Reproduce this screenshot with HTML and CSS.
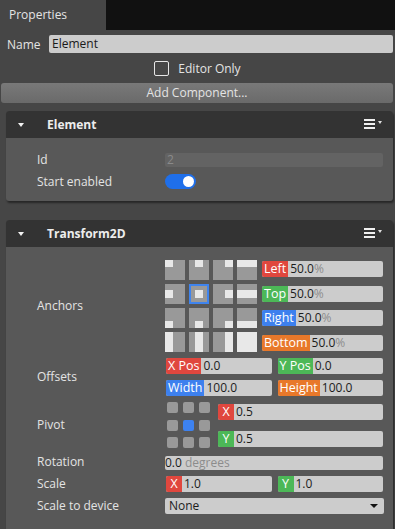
FILE: index.html
```
<html>
  <head>
    <title>Properties</title>
    <link rel="stylesheet" href="styles.css">
  </head>
  <body>
    <div class="tabbar">
      <div class="tab">Properties</div>
      <div class="tab-fill"></div>
    </div>

    <div class="name-row">
      <span class="name-label">Name</span>
      <div class="text-input">Element</div>
    </div>

    <div class="check-row">
      <span class="checkbox"></span>
      <span>Editor Only</span>
    </div>

    <div class="add-btn">Add Component...</div>

    <!-- Element component -->
    <div class="panel">
      <div class="panel-head">
        <span class="caret"></span>
        <span class="panel-title">Element</span>
        <span class="menu-icon"><i></i><i></i><i></i><b></b></span>
      </div>
      <div class="panel-body element-body">
        <div class="prop-label">Id</div>
        <div class="id-input">2</div>
        <div class="prop-label">Start enabled</div>
        <div><span class="toggle"><span class="knob"></span></span></div>
      </div>
    </div>

    <!-- Transform2D component -->
    <div class="panel panel-last">
      <div class="panel-head">
        <span class="caret"></span>
        <span class="panel-title">Transform2D</span>
        <span class="menu-icon"><i></i><i></i><i></i><b></b></span>
      </div>
      <div class="panel-body transform-body">
        <div class="prop-label">Anchors</div>
        <div class="anchors">
          <div class="anchor-grid">
            <span class="cell"><span class="mark tl"></span></span>
            <span class="cell"><span class="mark tc"></span></span>
            <span class="cell"><span class="mark tr"></span></span>
            <span class="cell"><span class="mark ts"></span></span>
            <span class="cell"><span class="mark ml"></span></span>
            <span class="cell selected"><span class="mark mc"></span></span>
            <span class="cell"><span class="mark mr"></span></span>
            <span class="cell"><span class="mark ms"></span></span>
            <span class="cell"><span class="mark bl"></span></span>
            <span class="cell"><span class="mark bc"></span></span>
            <span class="cell"><span class="mark br"></span></span>
            <span class="cell"><span class="mark bs"></span></span>
            <span class="cell"><span class="mark sl"></span></span>
            <span class="cell"><span class="mark sc"></span></span>
            <span class="cell"><span class="mark sr"></span></span>
            <span class="cell"><span class="mark ss"></span></span>
          </div>
          <div class="anchor-fields">
            <div class="field"><span class="chip red">Left</span><span class="val">50.0<em>%</em></span></div>
            <div class="field"><span class="chip green">Top</span><span class="val">50.0<em>%</em></span></div>
            <div class="field"><span class="chip blue">Right</span><span class="val">50.0<em>%</em></span></div>
            <div class="field"><span class="chip orange">Bottom</span><span class="val">50.0<em>%</em></span></div>
          </div>
        </div>

        <div class="prop-label">Offsets</div>
        <div class="offsets">
          <div class="field"><span class="chip red">X Pos</span><span class="val">0.0</span></div>
          <div class="field"><span class="chip green">Y Pos</span><span class="val">0.0</span></div>
          <div class="field"><span class="chip blue">Width</span><span class="val">100.0</span></div>
          <div class="field"><span class="chip orange">Height</span><span class="val">100.0</span></div>
        </div>

        <div class="prop-label">Pivot</div>
        <div class="pivot">
          <div class="pivot-grid">
            <span></span><span></span><span></span>
            <span></span><span class="on"></span><span></span>
            <span></span><span></span><span></span>
          </div>
          <div class="pivot-fields">
            <div class="field"><span class="chip red">X</span><span class="val">0.5</span></div>
            <div class="field"><span class="chip green">Y</span><span class="val">0.5</span></div>
          </div>
        </div>

        <div class="prop-label">Rotation</div>
        <div class="plain">0.0 <em>degrees</em></div>

        <div class="prop-label">Scale</div>
        <div class="pair">
          <div class="field"><span class="chip red">X</span><span class="val">1.0</span></div>
          <div class="field"><span class="chip green">Y</span><span class="val">1.0</span></div>
        </div>

        <div class="prop-label">Scale to device</div>
        <div class="select">None<span class="arrow"></span></div>
      </div>
    </div>
  </body>
</html>
```

FILE: styles.css
```
body {
  margin: 0;
  background: #464646;
  font-family: "Open Sans", "Noto Sans", sans-serif;
  font-size: 12px;
  color: #e4e4e4;
  width: 395px;
  height: 529px;
  overflow: hidden;
}

.tabbar {
  display: flex;
  height: 30px;
}
.tab {
  width: 106px;
  padding-left: 9px;
  line-height: 30px;
  box-sizing: border-box;
}
.tab-fill {
  flex: 1;
  background: #111111;
}

.name-row {
  display: flex;
  align-items: center;
  margin-top: 5px;
  height: 18px;
}
.name-label {
  width: 49px;
  padding-left: 7px;
  box-sizing: border-box;
}
.text-input {
  flex: 1;
  margin-right: 2px;
  height: 18px;
  line-height: 18px;
  background: #cccccc;
  color: #1a1a1a;
  padding-left: 3px;
  border-radius: 2px;
}

.check-row {
  display: flex;
  justify-content: center;
  align-items: center;
  gap: 9px;
  margin-top: 7px;
  height: 16px;
}
.checkbox {
  width: 13px;
  height: 13px;
  border: 1.5px solid #e6e6e6;
  border-radius: 2px;
}

.add-btn {
  margin: 7px 2px 0 1px;
  height: 20px;
  line-height: 20px;
  text-align: center;
  border-radius: 3px;
  background: linear-gradient(#797979, #6a6a6a);
}

.panel {
  margin: 8px 2px 0 6px;
  border-radius: 3px;
  background: #585858;
  box-shadow: 1px 2px 2px rgba(0, 0, 0, 0.45);
}
.panel-last {
  margin-top: 19px;
  height: 330px;
}
.panel-head {
  display: flex;
  align-items: center;
  height: 27px;
  background: #333333;
  border-radius: 3px 3px 0 0;
}
.caret {
  width: 0;
  height: 0;
  margin-left: 12px;
  border-left: 3.5px solid transparent;
  border-right: 3.5px solid transparent;
  border-top: 4px solid #f2f2f2;
}
.panel-title {
  margin-left: 23px;
  font-weight: bold;
  color: #ededed;
  flex: 1;
}
.menu-icon {
  position: relative;
  width: 19px;
  height: 11px;
  margin-right: 10px;
}
.menu-icon i {
  display: block;
  width: 11px;
  height: 2px;
  background: #f0f0f0;
  margin-bottom: 2px;
}
.menu-icon b {
  position: absolute;
  right: 1px;
  top: 2px;
  border-left: 2px solid transparent;
  border-right: 2px solid transparent;
  border-top: 3px solid #e0e0e0;
}

.panel-body {
  display: grid;
  grid-template-columns: 128px 218px;
  padding-left: 31px;
  align-items: center;
}
.prop-label {
  line-height: 16px;
}
.element-body {
  padding-top: 15px;
  padding-bottom: 12px;
  row-gap: 7px;
  grid-template-rows: 14px 15px;
}
.id-input {
  height: 14px;
  line-height: 14px;
  background: #636363;
  color: #8a8a8a;
  border-radius: 2px;
  padding-left: 2px;
}
.toggle {
  display: flex;
  justify-content: flex-end;
  align-items: center;
  width: 31px;
  height: 15px;
  border-radius: 8px;
  background: #1f6fea;
  padding-right: 2px;
  box-sizing: border-box;
}
.knob {
  width: 11px;
  height: 11px;
  border-radius: 50%;
  background: #ffffff;
}

.transform-body {
  padding-top: 13px;
  row-gap: 6px;
}

.anchors {
  display: flex;
  gap: 5px;
}
.anchor-grid {
  display: grid;
  grid-template-columns: repeat(4, 20px);
  grid-auto-rows: 20px;
  gap: 4px;
}
.cell {
  position: relative;
  background: #999999;
  box-sizing: border-box;
}
.cell.selected {
  border: 2px solid #3f84ee;
}
.mark {
  position: absolute;
  background: #e8e8e8;
}
.tl { left: 0; top: 0; width: 8px; height: 7px; }
.tc { left: 6px; top: 0; width: 8px; height: 7px; }
.tr { right: 0; top: 0; width: 8px; height: 7px; }
.ts { left: 0; right: 0; top: 0; height: 7px; }
.ml { left: 0; top: 6px; width: 8px; height: 8px; }
.mc { left: 4px; top: 4px; width: 8px; height: 8px; }
.mr { right: 0; top: 6px; width: 8px; height: 8px; }
.ms { left: 0; right: 0; top: 6px; height: 8px; }
.bl { left: 0; bottom: 0; width: 8px; height: 7px; }
.bc { left: 6px; bottom: 0; width: 8px; height: 7px; }
.br { right: 0; bottom: 0; width: 8px; height: 7px; }
.bs { left: 0; right: 0; bottom: 0; height: 7px; }
.sl { left: 0; top: 0; bottom: 0; width: 8px; }
.sc { left: 6px; top: 0; bottom: 0; width: 8px; }
.sr { right: 0; top: 0; bottom: 0; width: 8px; }
.ss { left: 0; top: 0; right: 0; bottom: 0; }

.anchor-fields {
  flex: 1;
  display: flex;
  flex-direction: column;
  justify-content: space-between;
  padding: 1px 0;
}

.field {
  display: flex;
  height: 16px;
  background: #cccccc;
  border-radius: 2px;
  overflow: hidden;
  line-height: 16px;
}
.chip {
  color: #ffffff;
  padding: 0 2px;
  min-width: 16px;
  box-sizing: border-box;
  text-align: center;
  font-size: 12.5px;
}
.chip.red { background: #e0473e; }
.chip.green { background: #4cb857; }
.chip.blue { background: #3d80ee; }
.chip.orange { background: #e8782a; }
.val {
  color: #1c1c1c;
  padding-left: 2px;
}
em {
  font-style: normal;
  color: #8c8c8c;
}

.plain {
  height: 14px;
  line-height: 14px;
  margin-top: 2px;
  background: #cccccc;
  color: #1c1c1c;
  border-radius: 2px;
}

.offsets {
  display: grid;
  grid-template-columns: 1fr 1fr;
  gap: 6px;
  margin-left: 1px;
}
.pair {
  display: grid;
  grid-template-columns: 1fr 1fr;
  gap: 6px;
  margin-left: 1px;
}

.pivot {
  display: flex;
  gap: 8px;
  padding-left: 2px;
}
.pivot-grid {
  display: grid;
  grid-template-columns: repeat(3, 11px);
  grid-auto-rows: 11px;
  gap: 6.5px 5px;
}
.pivot-grid span {
  background: #999999;
  border-radius: 2px;
}
.pivot-grid span.on {
  background: #3d82f0;
}
.pivot-fields {
  flex: 1;
  display: flex;
  flex-direction: column;
  justify-content: space-between;
  padding: 2px 0 1px;
}

.select {
  position: relative;
  height: 16px;
  line-height: 16px;
  background: #cccccc;
  color: #1c1c1c;
  border-radius: 2px;
  padding-left: 4px;
  margin-right: -1px;
}
.arrow {
  position: absolute;
  right: 6px;
  top: 6px;
  border-left: 4px solid transparent;
  border-right: 4px solid transparent;
  border-top: 4px solid #111111;
}
```
